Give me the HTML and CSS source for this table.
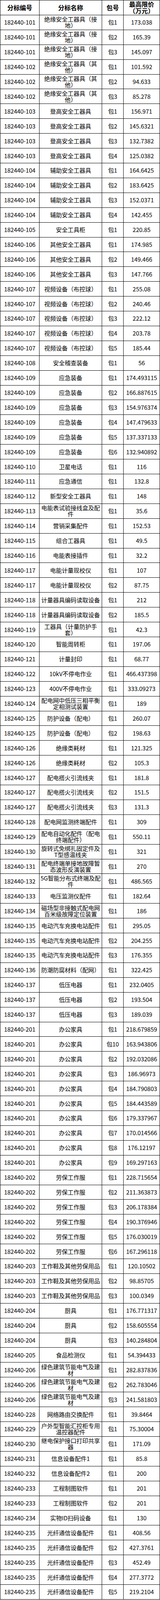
FILE: index.html
```html
<!DOCTYPE html>
<html lang="zh-CN">
<head>
<meta charset="utf-8">
<title>分标最高限价</title>
<link rel="stylesheet" href="styles.css">
</head>
<body>
<div class="sheet">
<div class="row head"><div class="cell">分标编号</div><div class="cell">分标名称</div><div class="cell">包号</div><div class="cell">最高限价<br>（万元）</div></div>
<div class="row"><div class="cell">182440-101</div><div class="cell">绝缘安全工器具（接地）</div><div class="cell">包1</div><div class="cell">173.038</div></div>
<div class="row"><div class="cell">182440-101</div><div class="cell">绝缘安全工器具（接地）</div><div class="cell">包2</div><div class="cell">165.39</div></div>
<div class="row"><div class="cell">182440-101</div><div class="cell">绝缘安全工器具（接地）</div><div class="cell">包3</div><div class="cell">145.097</div></div>
<div class="row"><div class="cell">182440-102</div><div class="cell">绝缘安全工器具（其他）</div><div class="cell">包1</div><div class="cell">101.592</div></div>
<div class="row"><div class="cell">182440-102</div><div class="cell">绝缘安全工器具（其他）</div><div class="cell">包2</div><div class="cell">94.633</div></div>
<div class="row"><div class="cell">182440-102</div><div class="cell">绝缘安全工器具（其他）</div><div class="cell">包3</div><div class="cell">85.278</div></div>
<div class="row"><div class="cell">182440-103</div><div class="cell">登高安全工器具</div><div class="cell">包1</div><div class="cell">156.971</div></div>
<div class="row"><div class="cell">182440-103</div><div class="cell">登高安全工器具</div><div class="cell">包2</div><div class="cell">145.6321</div></div>
<div class="row"><div class="cell">182440-103</div><div class="cell">登高安全工器具</div><div class="cell">包3</div><div class="cell">132.7382</div></div>
<div class="row"><div class="cell">182440-103</div><div class="cell">登高安全工器具</div><div class="cell">包4</div><div class="cell">125.0382</div></div>
<div class="row"><div class="cell">182440-104</div><div class="cell">辅助安全工器具</div><div class="cell">包1</div><div class="cell">164.6425</div></div>
<div class="row"><div class="cell">182440-104</div><div class="cell">辅助安全工器具</div><div class="cell">包2</div><div class="cell">183.6425</div></div>
<div class="row"><div class="cell">182440-104</div><div class="cell">辅助安全工器具</div><div class="cell">包3</div><div class="cell">152.0371</div></div>
<div class="row"><div class="cell">182440-104</div><div class="cell">辅助安全工器具</div><div class="cell">包4</div><div class="cell">142.455</div></div>
<div class="row"><div class="cell">182440-105</div><div class="cell">安全工具柜</div><div class="cell">包1</div><div class="cell">220.85</div></div>
<div class="row"><div class="cell">182440-106</div><div class="cell">其他安全工器具</div><div class="cell">包1</div><div class="cell">174.985</div></div>
<div class="row"><div class="cell">182440-106</div><div class="cell">其他安全工器具</div><div class="cell">包2</div><div class="cell">149.466</div></div>
<div class="row"><div class="cell">182440-106</div><div class="cell">其他安全工器具</div><div class="cell">包3</div><div class="cell">147.766</div></div>
<div class="row"><div class="cell">182440-107</div><div class="cell">视频设备（布控球）</div><div class="cell">包1</div><div class="cell">255.08</div></div>
<div class="row"><div class="cell">182440-107</div><div class="cell">视频设备（布控球）</div><div class="cell">包2</div><div class="cell">240.46</div></div>
<div class="row"><div class="cell">182440-107</div><div class="cell">视频设备（布控球）</div><div class="cell">包3</div><div class="cell">222.12</div></div>
<div class="row"><div class="cell">182440-107</div><div class="cell">视频设备（布控球）</div><div class="cell">包4</div><div class="cell">203.78</div></div>
<div class="row"><div class="cell">182440-107</div><div class="cell">视频设备（布控球）</div><div class="cell">包5</div><div class="cell">185.44</div></div>
<div class="row"><div class="cell">182440-108</div><div class="cell">安全稽查装备</div><div class="cell">包1</div><div class="cell">56</div></div>
<div class="row"><div class="cell">182440-109</div><div class="cell">应急装备</div><div class="cell">包1</div><div class="cell">174.493115</div></div>
<div class="row"><div class="cell">182440-109</div><div class="cell">应急装备</div><div class="cell">包2</div><div class="cell">166.887615</div></div>
<div class="row"><div class="cell">182440-109</div><div class="cell">应急装备</div><div class="cell">包3</div><div class="cell">154.976374</div></div>
<div class="row"><div class="cell">182440-109</div><div class="cell">应急装备</div><div class="cell">包4</div><div class="cell">147.479633</div></div>
<div class="row"><div class="cell">182440-109</div><div class="cell">应急装备</div><div class="cell">包5</div><div class="cell">137.337133</div></div>
<div class="row"><div class="cell">182440-109</div><div class="cell">应急装备</div><div class="cell">包6</div><div class="cell">132.940892</div></div>
<div class="row"><div class="cell">182440-110</div><div class="cell">卫星电话</div><div class="cell">包1</div><div class="cell">116</div></div>
<div class="row"><div class="cell">182440-111</div><div class="cell">应急通信</div><div class="cell">包1</div><div class="cell">132.8</div></div>
<div class="row"><div class="cell">182440-112</div><div class="cell">新型安全工器具</div><div class="cell">包1</div><div class="cell">148</div></div>
<div class="row"><div class="cell">182440-113</div><div class="cell">电能表试验接线盒及配件</div><div class="cell">包1</div><div class="cell">35.6</div></div>
<div class="row"><div class="cell">182440-114</div><div class="cell">营销采集配件</div><div class="cell">包1</div><div class="cell">152.53</div></div>
<div class="row"><div class="cell">182440-115</div><div class="cell">组合工器具</div><div class="cell">包1</div><div class="cell">49.5</div></div>
<div class="row"><div class="cell">182440-116</div><div class="cell">电能表接插件</div><div class="cell">包1</div><div class="cell">32.2</div></div>
<div class="row"><div class="cell">182440-117</div><div class="cell">电能计量现校仪</div><div class="cell">包1</div><div class="cell">107</div></div>
<div class="row"><div class="cell">182440-117</div><div class="cell">电能计量现校仪</div><div class="cell">包2</div><div class="cell">87.75</div></div>
<div class="row"><div class="cell">182440-118</div><div class="cell">计量器具编码读取设备</div><div class="cell">包1</div><div class="cell">212</div></div>
<div class="row"><div class="cell">182440-118</div><div class="cell">计量器具编码读取设备</div><div class="cell">包2</div><div class="cell">185.5</div></div>
<div class="row"><div class="cell">182440-119</div><div class="cell">工器具（计量防护手套）</div><div class="cell">包1</div><div class="cell">42.3</div></div>
<div class="row"><div class="cell">182440-120</div><div class="cell">智能周转柜</div><div class="cell">包1</div><div class="cell">197.06</div></div>
<div class="row"><div class="cell">182440-121</div><div class="cell">计量封印</div><div class="cell">包1</div><div class="cell">68.77</div></div>
<div class="row"><div class="cell">182440-122</div><div class="cell">10kV不停电作业</div><div class="cell">包1</div><div class="cell">466.437398</div></div>
<div class="row"><div class="cell">182440-123</div><div class="cell">400V不停电作业</div><div class="cell">包1</div><div class="cell">333.09273</div></div>
<div class="row"><div class="cell">182440-124</div><div class="cell">配电网中低压三相平衡定相测试装置</div><div class="cell">包1</div><div class="cell">189</div></div>
<div class="row"><div class="cell">182440-125</div><div class="cell">防护设备（配电）</div><div class="cell">包1</div><div class="cell">260.07</div></div>
<div class="row"><div class="cell">182440-125</div><div class="cell">防护设备（配电）</div><div class="cell">包2</div><div class="cell">198.63</div></div>
<div class="row"><div class="cell">182440-126</div><div class="cell">绝缘类耗材</div><div class="cell">包1</div><div class="cell">121.325</div></div>
<div class="row"><div class="cell">182440-126</div><div class="cell">绝缘类耗材</div><div class="cell">包2</div><div class="cell">105.3</div></div>
<div class="row"><div class="cell">182440-127</div><div class="cell">配电搭火引流线夹</div><div class="cell">包1</div><div class="cell">181.8</div></div>
<div class="row"><div class="cell">182440-127</div><div class="cell">配电搭火引流线夹</div><div class="cell">包2</div><div class="cell">151.5</div></div>
<div class="row"><div class="cell">182440-127</div><div class="cell">配电搭火引流线夹</div><div class="cell">包3</div><div class="cell">131.3</div></div>
<div class="row"><div class="cell">182440-128</div><div class="cell">配电网监测终端配件</div><div class="cell">包1</div><div class="cell">309</div></div>
<div class="row"><div class="cell">182440-129</div><div class="cell">配电自动化配件（配电终端配件）</div><div class="cell">包1</div><div class="cell">550.11</div></div>
<div class="row"><div class="cell">182440-130</div><div class="cell">旋转式免绑扎固定件及T型感温线夹</div><div class="cell">包1</div><div class="cell">321</div></div>
<div class="row"><div class="cell">182440-131</div><div class="cell">配电终端单接地故障暂态波形反演装置</div><div class="cell">包1</div><div class="cell">270</div></div>
<div class="row"><div class="cell">182440-132</div><div class="cell">5G智能分布式终端及配件</div><div class="cell">包1</div><div class="cell">486.565</div></div>
<div class="row"><div class="cell">182440-133</div><div class="cell">电压监测仪配件</div><div class="cell">包1</div><div class="cell">182.64</div></div>
<div class="row"><div class="cell">182440-134</div><div class="cell">磁场型非接触式配电网百米级故障定位装置</div><div class="cell">包1</div><div class="cell">186</div></div>
<div class="row"><div class="cell">182440-135</div><div class="cell">电动汽车充换电站配件</div><div class="cell">包1</div><div class="cell">295.05</div></div>
<div class="row"><div class="cell">182440-135</div><div class="cell">电动汽车充换电站配件</div><div class="cell">包2</div><div class="cell">204.255</div></div>
<div class="row"><div class="cell">182440-135</div><div class="cell">电动汽车充换电站配件</div><div class="cell">包3</div><div class="cell">176.355</div></div>
<div class="row"><div class="cell">182440-136</div><div class="cell">防潮防腐材料（配网）</div><div class="cell">包1</div><div class="cell">322.425</div></div>
<div class="row"><div class="cell">182440-137</div><div class="cell">低压电器</div><div class="cell">包1</div><div class="cell">232.0405</div></div>
<div class="row"><div class="cell">182440-137</div><div class="cell">低压电器</div><div class="cell">包2</div><div class="cell">193.504</div></div>
<div class="row"><div class="cell">182440-137</div><div class="cell">低压电器</div><div class="cell">包3</div><div class="cell">189.039</div></div>
<div class="row"><div class="cell">182440-201</div><div class="cell">办公家具</div><div class="cell">包1</div><div class="cell">218.679859</div></div>
<div class="row"><div class="cell">182440-201</div><div class="cell">办公家具</div><div class="cell">包10</div><div class="cell">163.943806</div></div>
<div class="row"><div class="cell">182440-201</div><div class="cell">办公家具</div><div class="cell">包2</div><div class="cell">192.032086</div></div>
<div class="row"><div class="cell">182440-201</div><div class="cell">办公家具</div><div class="cell">包3</div><div class="cell">186.96973</div></div>
<div class="row"><div class="cell">182440-201</div><div class="cell">办公家具</div><div class="cell">包4</div><div class="cell">184.790803</div></div>
<div class="row"><div class="cell">182440-201</div><div class="cell">办公家具</div><div class="cell">包5</div><div class="cell">184.443589</div></div>
<div class="row"><div class="cell">182440-201</div><div class="cell">办公家具</div><div class="cell">包6</div><div class="cell">179.337967</div></div>
<div class="row"><div class="cell">182440-201</div><div class="cell">办公家具</div><div class="cell">包7</div><div class="cell">170.014566</div></div>
<div class="row"><div class="cell">182440-201</div><div class="cell">办公家具</div><div class="cell">包8</div><div class="cell">176.12197</div></div>
<div class="row"><div class="cell">182440-201</div><div class="cell">办公家具</div><div class="cell">包9</div><div class="cell">169.297163</div></div>
<div class="row"><div class="cell">182440-202</div><div class="cell">劳保工作服</div><div class="cell">包1</div><div class="cell">228.715654</div></div>
<div class="row"><div class="cell">182440-202</div><div class="cell">劳保工作服</div><div class="cell">包2</div><div class="cell">211.363873</div></div>
<div class="row"><div class="cell">182440-202</div><div class="cell">劳保工作服</div><div class="cell">包3</div><div class="cell">206.178384</div></div>
<div class="row"><div class="cell">182440-202</div><div class="cell">劳保工作服</div><div class="cell">包4</div><div class="cell">190.376946</div></div>
<div class="row"><div class="cell">182440-202</div><div class="cell">劳保工作服</div><div class="cell">包5</div><div class="cell">176.030019</div></div>
<div class="row"><div class="cell">182440-202</div><div class="cell">劳保工作服</div><div class="cell">包6</div><div class="cell">167.296118</div></div>
<div class="row"><div class="cell">182440-203</div><div class="cell">工作鞋及其他劳保用品</div><div class="cell">包1</div><div class="cell">120.10502</div></div>
<div class="row"><div class="cell">182440-203</div><div class="cell">工作鞋及其他劳保用品</div><div class="cell">包2</div><div class="cell">98.85705</div></div>
<div class="row"><div class="cell">182440-203</div><div class="cell">工作鞋及其他劳保用品</div><div class="cell">包3</div><div class="cell">100.0349</div></div>
<div class="row"><div class="cell">182440-204</div><div class="cell">厨具</div><div class="cell">包1</div><div class="cell">176.771317</div></div>
<div class="row"><div class="cell">182440-204</div><div class="cell">厨具</div><div class="cell">包2</div><div class="cell">158.605554</div></div>
<div class="row"><div class="cell">182440-204</div><div class="cell">厨具</div><div class="cell">包3</div><div class="cell">140.284804</div></div>
<div class="row"><div class="cell">182440-205</div><div class="cell">食品检测仪</div><div class="cell">包1</div><div class="cell">54.394433</div></div>
<div class="row"><div class="cell">182440-206</div><div class="cell">绿色建筑节能电气及建材</div><div class="cell">包1</div><div class="cell">282.837836</div></div>
<div class="row"><div class="cell">182440-206</div><div class="cell">绿色建筑节能电气及建材</div><div class="cell">包2</div><div class="cell">262.783046</div></div>
<div class="row"><div class="cell">182440-206</div><div class="cell">绿色建筑节能电气及建材</div><div class="cell">包3</div><div class="cell">241.581803</div></div>
<div class="row"><div class="cell">182440-228</div><div class="cell">网络路由交换配件</div><div class="cell">包1</div><div class="cell">39.8464</div></div>
<div class="row"><div class="cell">182440-229</div><div class="cell">户外型智能汇控柜专用温控器配件</div><div class="cell">包1</div><div class="cell">75.30004</div></div>
<div class="row"><div class="cell">182440-230</div><div class="cell">继电保护接口打印共享器</div><div class="cell">包1</div><div class="cell">171.09</div></div>
<div class="row"><div class="cell">182440-231</div><div class="cell">信息设备配件1</div><div class="cell">包1</div><div class="cell">85.8</div></div>
<div class="row"><div class="cell">182440-232</div><div class="cell">信息设备配件2</div><div class="cell">包1</div><div class="cell">200</div></div>
<div class="row"><div class="cell">182440-233</div><div class="cell">工程制图软件</div><div class="cell">包1</div><div class="cell">201</div></div>
<div class="row"><div class="cell">182440-233</div><div class="cell">工程制图软件</div><div class="cell">包2</div><div class="cell">201</div></div>
<div class="row"><div class="cell">182440-234</div><div class="cell">实物ID扫码设备</div><div class="cell">包1</div><div class="cell">130</div></div>
<div class="row"><div class="cell">182440-235</div><div class="cell">光纤通信设备配件</div><div class="cell">包1</div><div class="cell">408.56</div></div>
<div class="row"><div class="cell">182440-235</div><div class="cell">光纤通信设备配件</div><div class="cell">包2</div><div class="cell">427.3761</div></div>
<div class="row"><div class="cell">182440-235</div><div class="cell">光纤通信设备配件</div><div class="cell">包3</div><div class="cell">452.49</div></div>
<div class="row"><div class="cell">182440-235</div><div class="cell">光纤通信设备配件</div><div class="cell">包4</div><div class="cell">277.3772</div></div>
<div class="row"><div class="cell">182440-235</div><div class="cell">光纤通信设备配件</div><div class="cell">包5</div><div class="cell">219.2104</div></div>
</div>
</body>
</html>
```

FILE: styles.css
```css
html, body {
  margin: 0;
  padding: 0;
  background: #fff;
}

.sheet {
  --row-h: calc((100vh - 1px) / 108);
  width: 409px;
  box-sizing: border-box;
  border-top: 1px solid #000;
  border-left: 1px solid #000;
  font-family: "Noto Sans CJK SC", "Noto Sans", sans-serif;
  font-size: 15px;
  line-height: 16px;
  color: #000;
}

.row {
  display: grid;
  grid-template-columns: 100px 160px 55px 93px;
  height: var(--row-h);
}

.cell {
  box-sizing: border-box;
  height: var(--row-h);
  border-right: 1px solid #000;
  border-bottom: 1px solid #000;
  padding: 0 2px;
  display: flex;
  align-items: center;
  justify-content: center;
  text-align: center;
}

.head .cell {
  font-size: 16px;
  line-height: 17px;
  font-weight: bold;
}
```
